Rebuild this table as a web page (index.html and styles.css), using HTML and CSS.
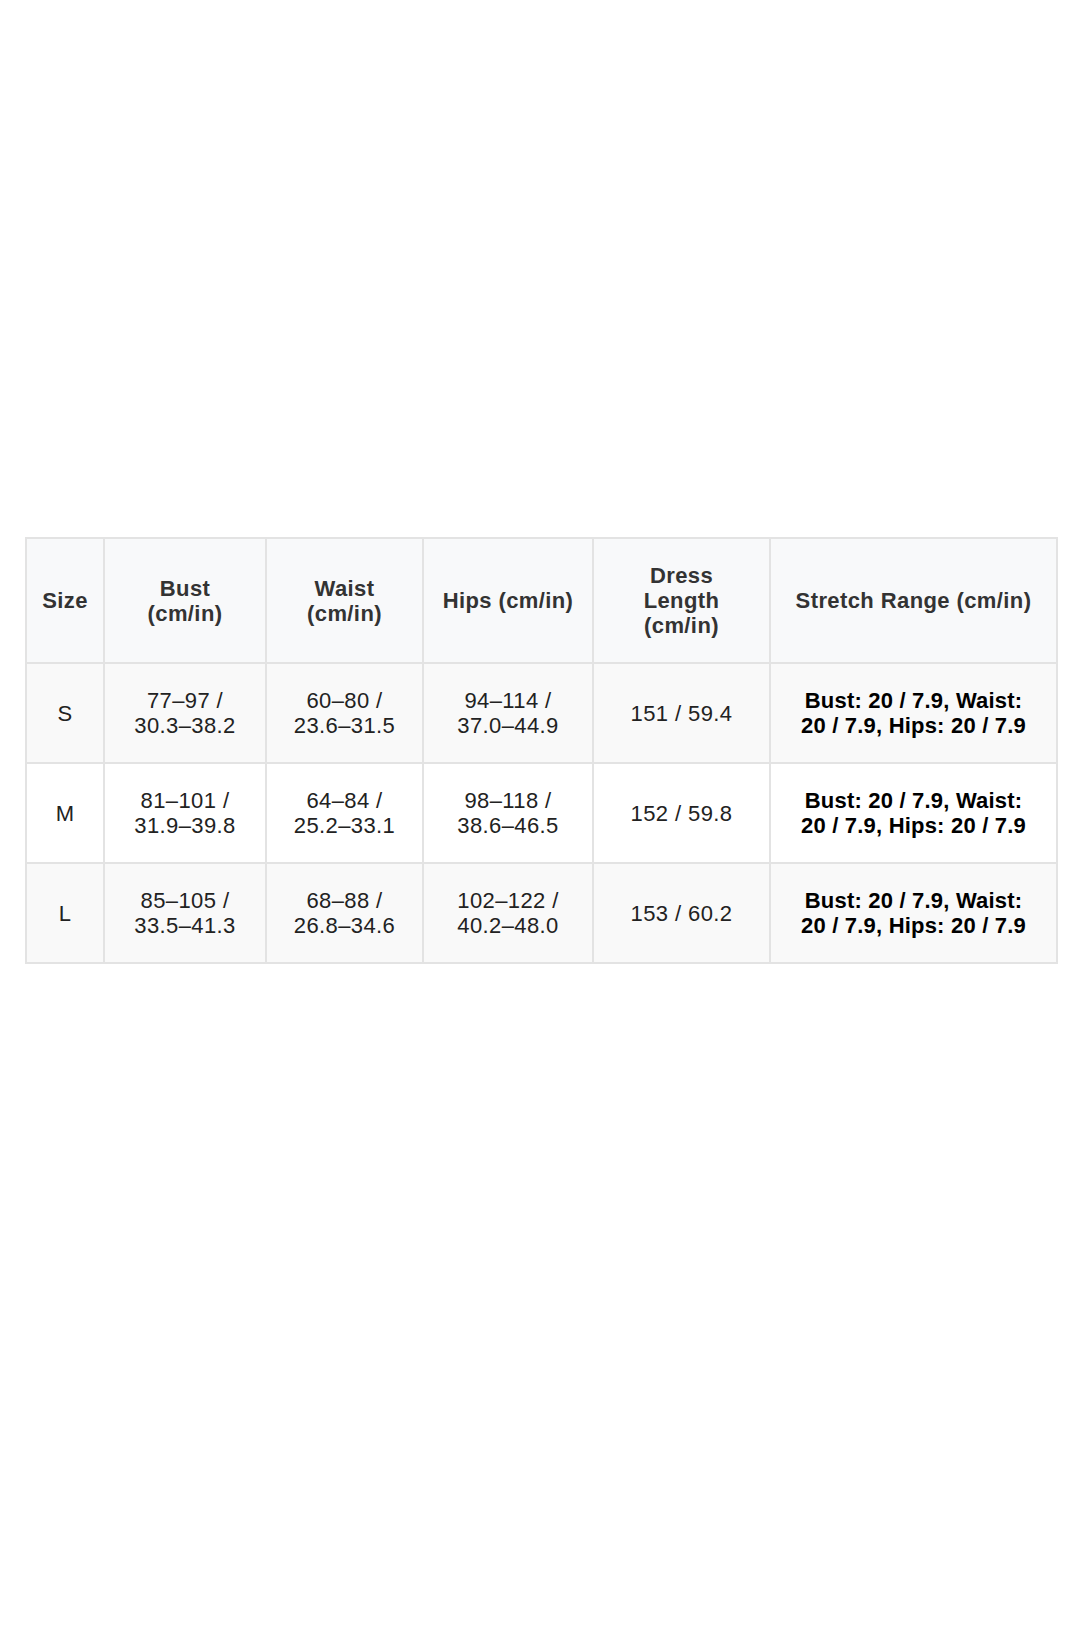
FILE: index.html
```html
<!DOCTYPE html>
<html lang="en">
<head>
<meta charset="utf-8">
<title>Size Chart</title>
<link rel="stylesheet" href="styles.css">
</head>
<body>
<main class="page">
  <table class="size-table">
    <colgroup>
      <col class="c-size">
      <col class="c-bust">
      <col class="c-waist">
      <col class="c-hips">
      <col class="c-length">
      <col class="c-stretch">
    </colgroup>
    <thead>
      <tr>
        <th>Size</th>
        <th>Bust<br>(cm/in)</th>
        <th>Waist<br>(cm/in)</th>
        <th>Hips (cm/in)</th>
        <th>Dress<br>Length<br>(cm/in)</th>
        <th>Stretch Range (cm/in)</th>
      </tr>
    </thead>
    <tbody>
      <tr class="alt">
        <td>S</td>
        <td>77–97 /<br>30.3–38.2</td>
        <td>60–80 /<br>23.6–31.5</td>
        <td>94–114 /<br>37.0–44.9</td>
        <td>151 / 59.4</td>
        <td class="stretch">Bust: 20 / 7.9, Waist:<br>20 / 7.9, Hips: 20 / 7.9</td>
      </tr>
      <tr>
        <td>M</td>
        <td>81–101 /<br>31.9–39.8</td>
        <td>64–84 /<br>25.2–33.1</td>
        <td>98–118 /<br>38.6–46.5</td>
        <td>152 / 59.8</td>
        <td class="stretch">Bust: 20 / 7.9, Waist:<br>20 / 7.9, Hips: 20 / 7.9</td>
      </tr>
      <tr class="alt">
        <td>L</td>
        <td>85–105 /<br>33.5–41.3</td>
        <td>68–88 /<br>26.8–34.6</td>
        <td>102–122 /<br>40.2–48.0</td>
        <td>153 / 60.2</td>
        <td class="stretch">Bust: 20 / 7.9, Waist:<br>20 / 7.9, Hips: 20 / 7.9</td>
      </tr>
    </tbody>
  </table>
</main>
</body>
</html>
```

FILE: styles.css
```css
html, body {
  margin: 0;
  padding: 0;
  background: #ffffff;
}

.page {
  padding: 537px 0 0 25px;
  min-height: 1632px;
  box-sizing: border-box;
}

.size-table {
  border-collapse: collapse;
  table-layout: fixed;
  width: 1031px;
  font-family: "Liberation Sans", Arial, sans-serif;
  font-size: 22px;
  letter-spacing: 0.4px;
  line-height: 25px;
  color: #222222;
  text-align: center;
}

.c-size { width: 78px; }
.c-bust { width: 162px; }
.c-waist { width: 157px; }
.c-hips { width: 170px; }
.c-length { width: 177px; }
.c-stretch { width: 287px; }

.size-table th,
.size-table td {
  border: 2px solid #e3e3e3;
  padding: 0 8px;
  vertical-align: middle;
}

.size-table th {
  height: 123px;
  background: #f8f9fa;
  color: #333333;
  font-weight: bold;
}

.size-table td {
  height: 98px;
  background: #ffffff;
}

.size-table tr.alt td {
  background: #f9f9f9;
}

.size-table td.stretch {
  font-weight: bold;
  color: #000000;
  letter-spacing: 0.2px;
}
```
